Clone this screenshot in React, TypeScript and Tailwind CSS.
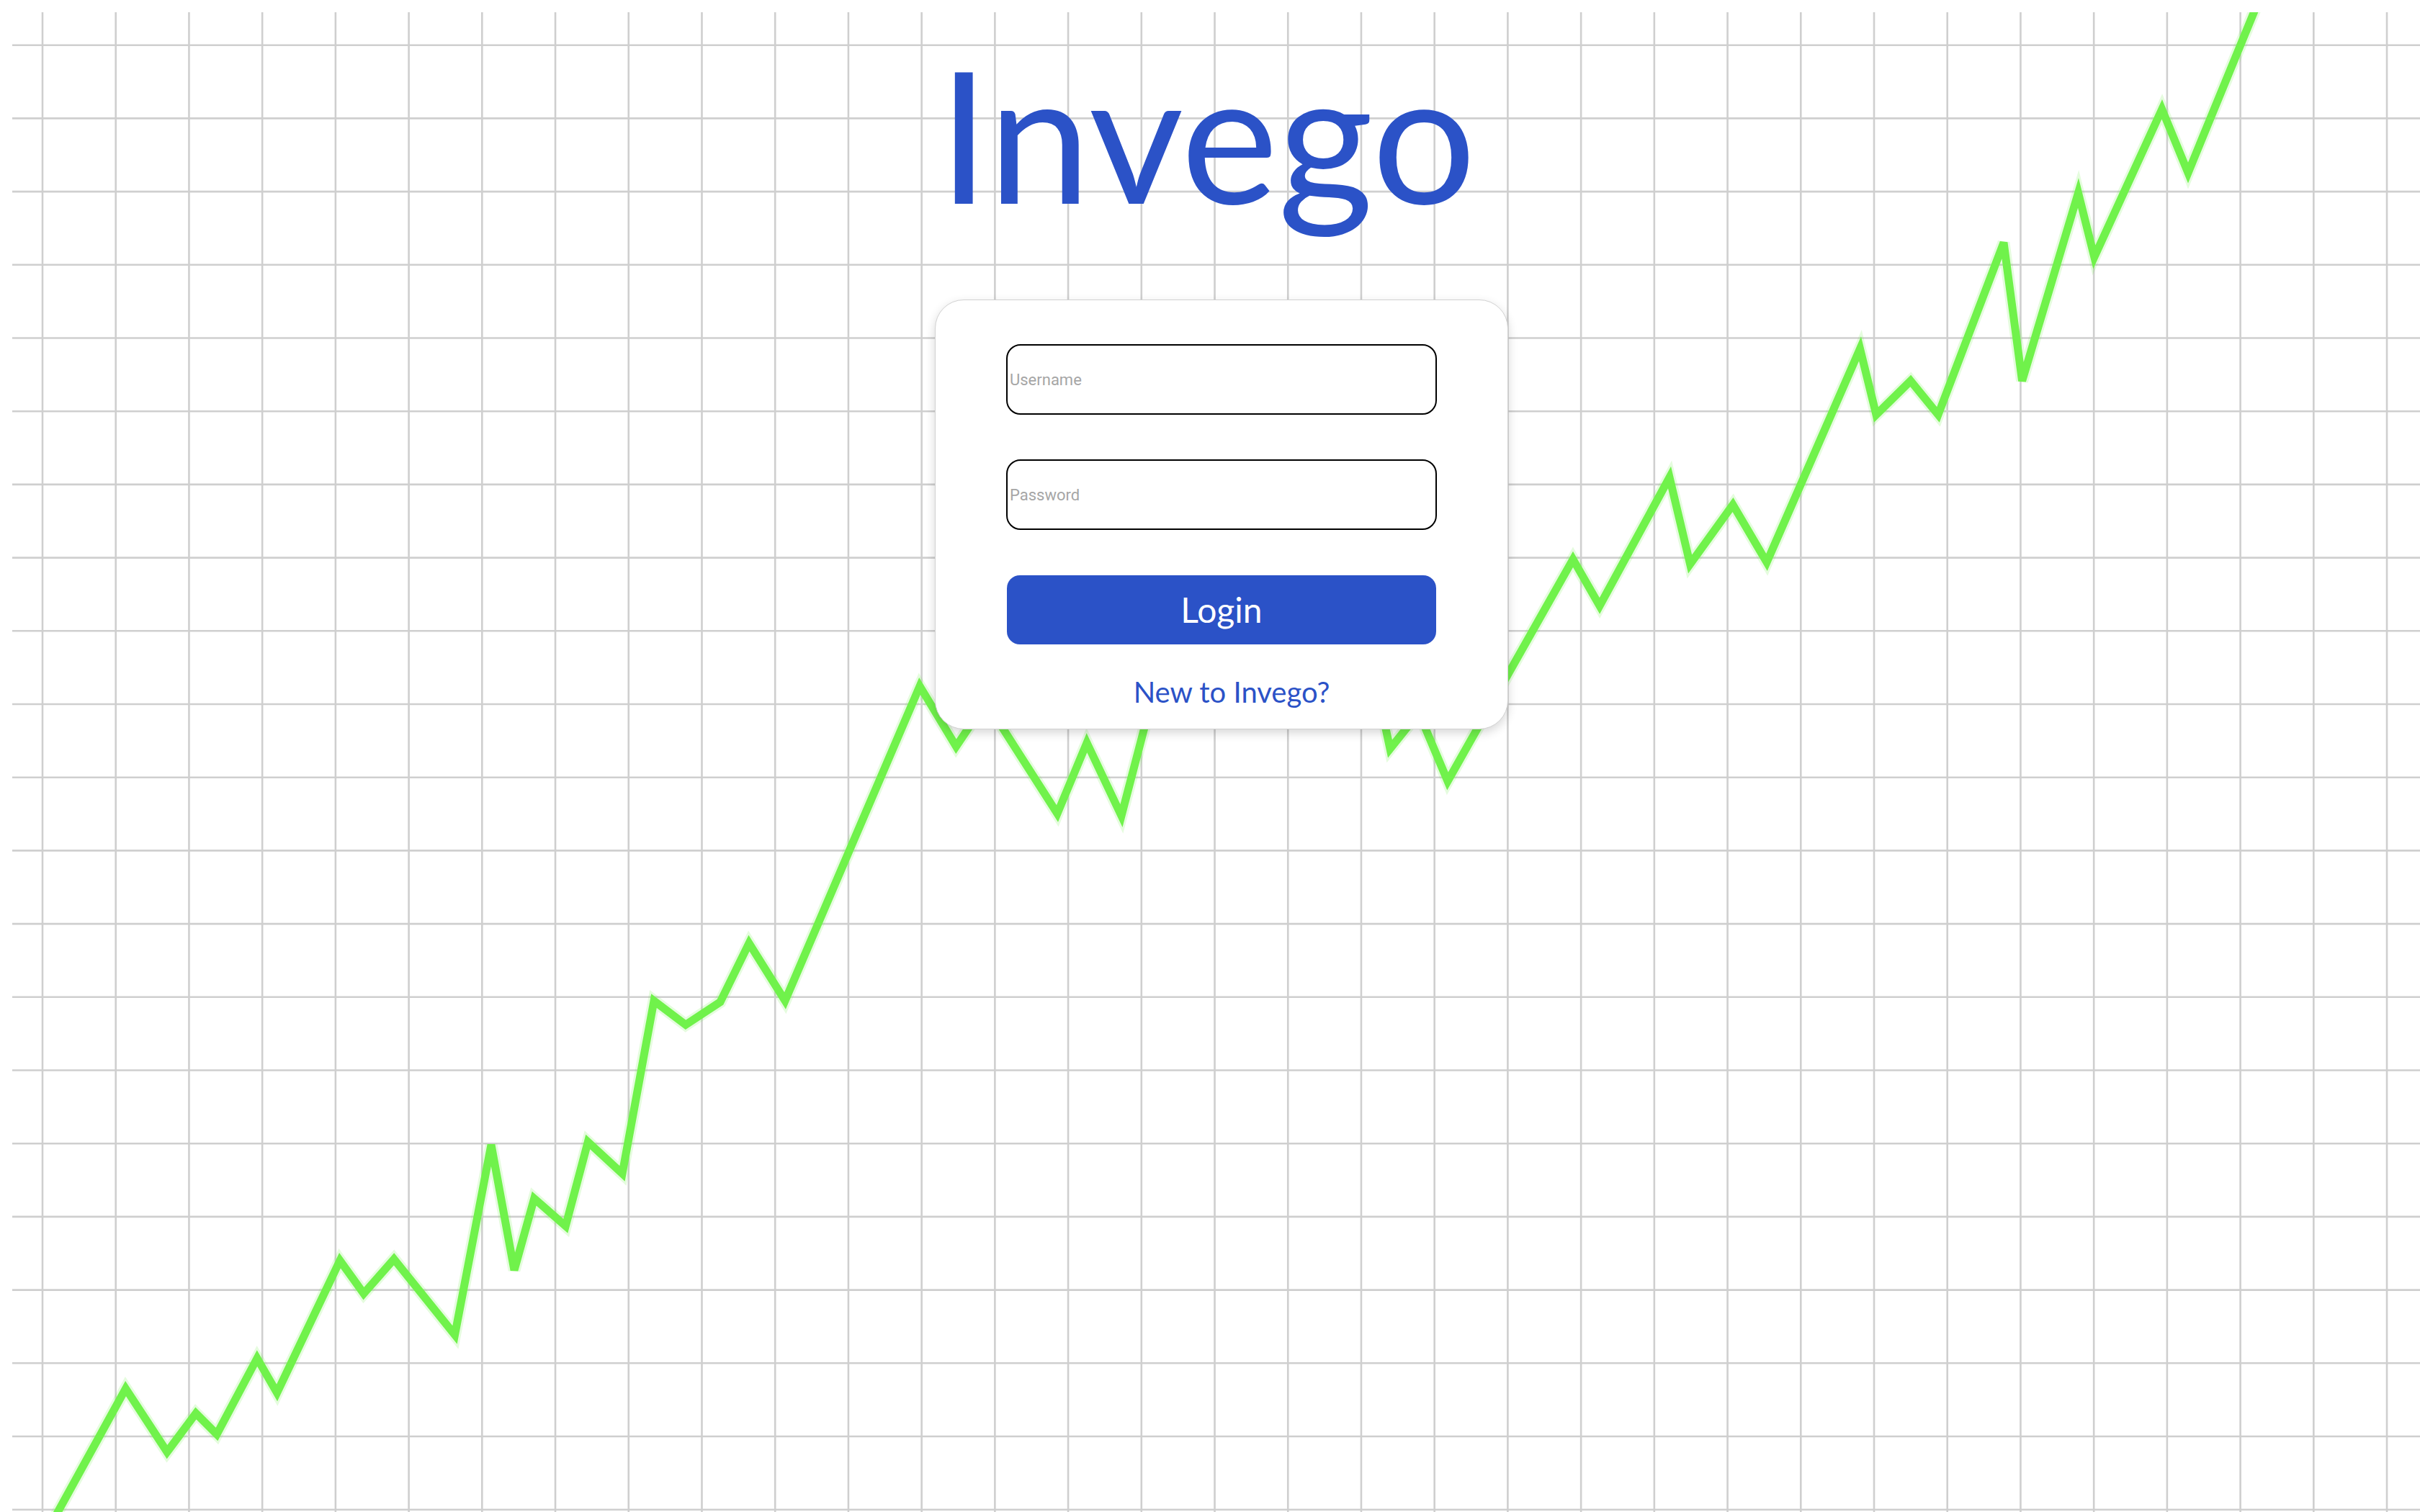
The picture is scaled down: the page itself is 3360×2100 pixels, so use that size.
import React from "react";

const PTS: [number, number][] = [
  [72, 2115],
  [174.5, 1928.6],
  [232, 2016.6],
  [272, 1963],
  [301, 1992],
  [357, 1886.5],
  [384.6, 1934.4],
  [472, 1750.7],
  [505, 1796.6],
  [547, 1748.8],
  [631.5, 1854],
  [682, 1590],
  [714, 1764],
  [741.7, 1664.6],
  [785.3, 1702.8],
  [816.3, 1586],
  [864, 1630],
  [908, 1390],
  [952, 1423.3],
  [1000, 1391.7],
  [1040, 1310],
  [1090, 1390],
  [1277, 953],
  [1327.5, 1036.7],
  [1369, 975],
  [1468, 1130],
  [1509, 1031.7],
  [1557, 1133],
  [1610, 930],
  [1680, 980],
  [1760, 850],
  [1840, 920],
  [1900, 900],
  [1930, 1040],
  [1970, 990],
  [2010, 1085],
  [2184, 776.8],
  [2221, 841.5],
  [2318, 663],
  [2346.6, 783.5],
  [2406, 701],
  [2453, 781],
  [2582.5, 484.4],
  [2605, 576],
  [2652.7, 529],
  [2691, 576],
  [2782, 337],
  [2807.6, 529],
  [2885.5, 268],
  [2907.8, 357],
  [3001.7, 151.7],
  [3038, 240],
  [3161, -60],
];

const VX = Array.from({ length: 33 }, (_, i) => 59 + 101.72 * i);
const HY = Array.from({ length: 21 }, (_, j) => 62.7 + 101.7 * j);

function ChartBackground() {
  const pts = PTS.map((p) => p.join(",")).join(" ");
  return (
    <svg
      className="absolute left-[17px] top-[17px] w-[3343px] h-[2083px]"
      viewBox="17 17 3343 2083"
      preserveAspectRatio="none"
    >
      <g stroke="#cfcfcf" strokeWidth={2.6}>
        {VX.map((x) => (
          <line key={"v" + x} x1={x} y1={17} x2={x} y2={2100} />
        ))}
        {HY.map((y) => (
          <line key={"h" + y} x1={17} y1={y} x2={3360} y2={y} />
        ))}
      </g>
      <polyline
        points={pts}
        fill="none"
        stroke="#6ff04a"
        strokeOpacity={0.18}
        strokeWidth={17}
        strokeLinejoin="miter"
        strokeMiterlimit={4}
      />
      <polyline
        points={pts}
        fill="none"
        stroke="#70f24b"
        strokeWidth={11}
        strokeLinejoin="miter"
        strokeMiterlimit={4}
      />
    </svg>
  );
}

export default function App() {
  return (
    <div className="relative w-full h-screen overflow-hidden bg-white">
      <ChartBackground />
      <div className="relative flex flex-col items-center">
        <h1 className="mt-[31px] mr-[8px] text-[255px] leading-[1.2] font-normal text-[#2b52c7] font-['Lato',sans-serif]">
          Invego
        </h1>
        <div className="mt-[79px] ml-[32px] w-[796px] h-[597px] rounded-[40px] bg-white border border-[#d2d2d2] shadow-[0_5px_14px_rgba(0,0,0,0.16)] flex flex-col items-center pt-[61px]">
          <input
            type="text"
            placeholder="Username"
            className="w-[598px] h-[98px] border-2 border-black rounded-[20px] pl-[3px] text-[22px] font-['Roboto',sans-serif] text-black placeholder:text-[#a6a6a6] outline-none"
          />
          <input
            type="password"
            placeholder="Password"
            className="mt-[62px] w-[598px] h-[98px] border-2 border-black rounded-[20px] pl-[3px] text-[22px] font-['Roboto',sans-serif] text-black placeholder:text-[#a6a6a6] outline-none"
          />
          <button className="mt-[63px] w-[596px] h-[96px] rounded-[18px] bg-[#2b52c7] text-white text-[48px] leading-none font-['Lato',sans-serif] flex items-center justify-center">
            Login
          </button>
          <a className="mt-[42px] ml-[28px] text-[40px] leading-[48px] text-[#2b52c7] font-['Lato',sans-serif] cursor-pointer">
            New to Invego?
          </a>
        </div>
      </div>
    </div>
  );
}
